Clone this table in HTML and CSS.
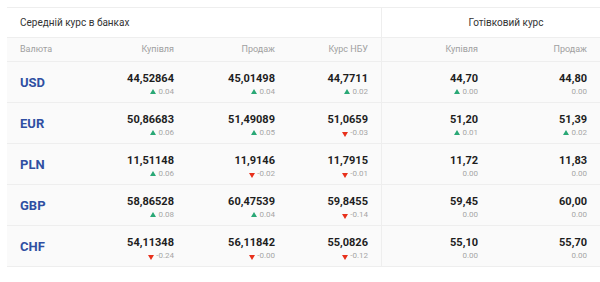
FILE: index.html
```
<!DOCTYPE html>
<html lang="uk">
<head>
<meta charset="utf-8">
<link rel="stylesheet" href="styles.css">
</head>
<body>
<div class="rates">
  <div class="cell title title-left">Середній курс в банках</div>
  <div class="cell title title-right">Готівковий курс</div>

  <div class="cell head left">Валюта</div>
  <div class="cell head">Купівля</div>
  <div class="cell head">Продаж</div>
  <div class="cell head sep">Курс НБУ</div>
  <div class="cell head">Купівля</div>
  <div class="cell head">Продаж</div>

  <div class="cell code">USD</div>
  <div class="cell num"><div class="v">44,52864</div><div class="d"><i class="up"></i>0.04</div></div>
  <div class="cell num"><div class="v">45,01498</div><div class="d"><i class="up"></i>0.04</div></div>
  <div class="cell num sep"><div class="v">44,7711</div><div class="d"><i class="up"></i>0.02</div></div>
  <div class="cell num"><div class="v">44,70</div><div class="d"><i class="up"></i>0.00</div></div>
  <div class="cell num"><div class="v">44,80</div><div class="d">0.00</div></div>

  <div class="cell code">EUR</div>
  <div class="cell num"><div class="v">50,86683</div><div class="d"><i class="up"></i>0.06</div></div>
  <div class="cell num"><div class="v">51,49089</div><div class="d"><i class="up"></i>0.05</div></div>
  <div class="cell num sep"><div class="v">51,0659</div><div class="d"><i class="down"></i>-0.03</div></div>
  <div class="cell num"><div class="v">51,20</div><div class="d"><i class="up"></i>0.01</div></div>
  <div class="cell num"><div class="v">51,39</div><div class="d"><i class="up"></i>0.02</div></div>

  <div class="cell code">PLN</div>
  <div class="cell num"><div class="v">11,51148</div><div class="d"><i class="up"></i>0.06</div></div>
  <div class="cell num"><div class="v">11,9146</div><div class="d"><i class="down"></i>-0.02</div></div>
  <div class="cell num sep"><div class="v">11,7915</div><div class="d"><i class="down"></i>-0.01</div></div>
  <div class="cell num"><div class="v">11,72</div><div class="d">0.00</div></div>
  <div class="cell num"><div class="v">11,83</div><div class="d">0.00</div></div>

  <div class="cell code">GBP</div>
  <div class="cell num"><div class="v">58,86528</div><div class="d"><i class="up"></i>0.08</div></div>
  <div class="cell num"><div class="v">60,47539</div><div class="d"><i class="up"></i>0.04</div></div>
  <div class="cell num sep"><div class="v">59,8455</div><div class="d"><i class="down"></i>-0.14</div></div>
  <div class="cell num"><div class="v">59,45</div><div class="d">0.00</div></div>
  <div class="cell num"><div class="v">60,00</div><div class="d">0.00</div></div>

  <div class="cell code">CHF</div>
  <div class="cell num"><div class="v">54,11348</div><div class="d"><i class="down"></i>-0.24</div></div>
  <div class="cell num"><div class="v">56,11842</div><div class="d"><i class="down"></i>-0.00</div></div>
  <div class="cell num sep"><div class="v">55,0826</div><div class="d"><i class="down"></i>-0.12</div></div>
  <div class="cell num"><div class="v">55,10</div><div class="d">0.00</div></div>
  <div class="cell num"><div class="v">55,70</div><div class="d">0.00</div></div>
</div>
</body>
</html>
```
FILE: styles.css
```
html, body {
  margin: 0;
  padding: 0;
  background: #fff;
}
body {
  padding: 7px 0 0 7px;
  font-family: Roboto, "Noto Sans", Arial, sans-serif;
  overflow: hidden;
}
.rates {
  display: grid;
  grid-template-columns: 80px 100px 101px 94px 109px 109px;
  width: 593px;
  border-top: 1px solid #eeeeee;
  background: #fafafa;
}
.cell {
  border-bottom: 1px solid #eeeeee;
  box-sizing: border-box;
}
.title {
  height: 30px;
  background: #fff;
  font-size: 10px;
  color: #333;
  line-height: 29px;
}
.title-left {
  grid-column: 1 / span 4;
  padding-left: 13px;
  border-right: 1px solid #eeeeee;
}
.title-right {
  grid-column: 5 / span 2;
  text-align: center;
  padding-left: 30px;
}
.head {
  height: 24px;
  line-height: 23px;
  font-size: 9px;
  color: #a0a0a0;
  text-align: right;
  padding-right: 13px;
}
.head.left {
  text-align: left;
  padding-left: 13px;
}
.sep {
  border-right: 1px solid #eeeeee;
}
.code {
  height: 41px;
  padding-left: 13px;
  font-size: 13px;
  font-weight: 700;
  color: #2f4fa2;
  line-height: 41px;
}
.num {
  height: 41px;
  text-align: right;
  padding: 10px 13px 0 0;
}
.v {
  font-size: 11px;
  font-weight: 700;
  color: #1e1e1e;
  line-height: 13px;
}
.d {
  margin-top: 1px;
  font-size: 8px;
  color: #a6a6a6;
  line-height: 11px;
}
.up, .down {
  display: inline-block;
  width: 0;
  height: 0;
  border-left: 3px solid transparent;
  border-right: 3px solid transparent;
  margin-right: 2px;
}
.up {
  border-bottom: 5px solid #2aa876;
}
.down {
  border-top: 5px solid #e8311c;
  vertical-align: -2px;
}
```
